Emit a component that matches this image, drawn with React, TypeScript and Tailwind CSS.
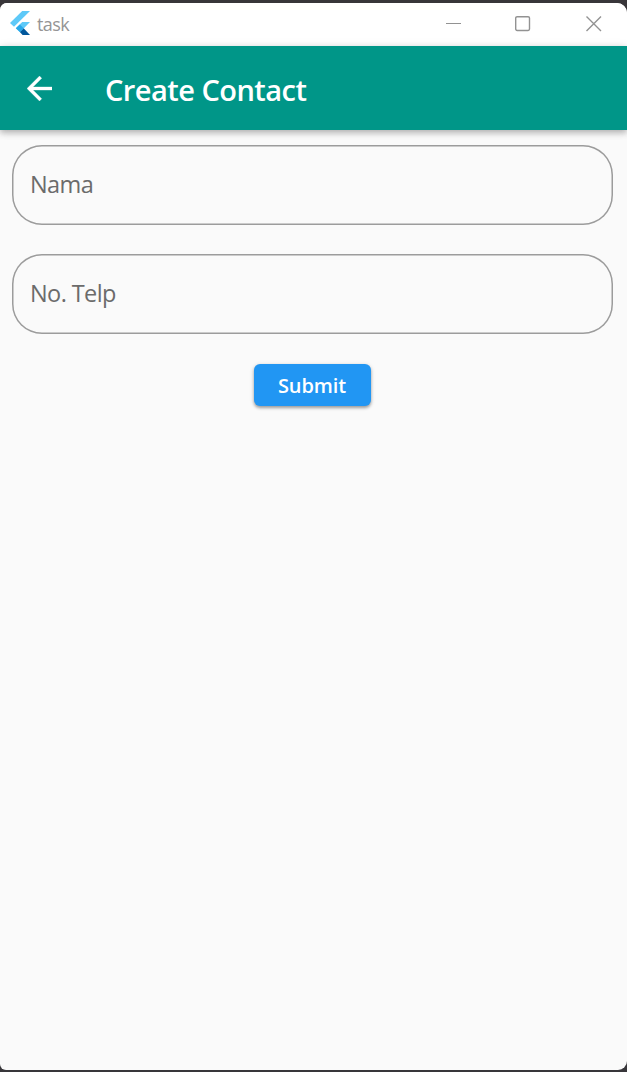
function FlutterLogo() {
  return (
    <svg className="h-6 w-5" viewBox="0 0 20 24" aria-hidden="true">
      <path d="M12.2 0H20L4 15.7 0 12Z" fill="#5ec9f8" />
      <path d="M12.2 11H20L13.7 17.4 9.8 21.1 5.8 17.2Z" fill="#5ec9f8" />
      <path d="M9.8 21.1 13.7 17.3 20 24H12.6Z" fill="#01579b" />
      <path d="M5.8 17.2 9.8 13.4 13.7 17.3 9.8 21.1Z" fill="#29a9ea" />
    </svg>
  );
}

function TitleBar() {
  return (
    <div className="flex h-[43px] shrink-0 items-start bg-white pl-[10px] pt-2">
      <FlutterLogo />
      <span className="ml-[7px] mt-[1px] text-[18px] leading-6 tracking-[-0.6px] text-[#959595]">task</span>
      <div className="ml-auto flex pr-[25px] pt-[5px] text-[#929292]">
        <svg className="mr-[53px] h-4 w-4" viewBox="0 0 16 16" fill="none" stroke="currentColor">
          <path d="M0 7.5H15" />
        </svg>
        <svg className="mr-[55px] h-4 w-4" viewBox="0 0 16 16" fill="none" stroke="currentColor" strokeWidth="1.4">
          <rect x="0.7" y="0.7" width="13.8" height="13.8" rx="1.4" />
        </svg>
        <svg className="h-4 w-4" viewBox="0 0 16 16" fill="none" stroke="currentColor" strokeWidth="1.4">
          <path d="M.5.5 15 15M15 .5.5 15" />
        </svg>
      </div>
    </div>
  );
}

function AppBar() {
  return (
    <header className="relative flex h-[84px] shrink-0 items-center bg-[#009688] pl-[27px] text-white shadow-[0_3px_6px_rgba(0,0,0,0.22),0_1px_9px_rgba(0,0,0,0.12)]">
      <svg className="h-[25px] w-[25px]" viewBox="4 4 16 16" fill="currentColor" stroke="currentColor" strokeWidth="0.2" aria-label="Back">
        <path d="M20 11H7.83l5.59-5.59L12 4l-8 8 8 8 1.41-1.41L7.83 13H20v-2z" />
      </svg>
      <h1 className="ml-[53px] mt-[4px] text-[29px] font-semibold leading-9 tracking-[-0.53px]">Create Contact</h1>
    </header>
  );
}

function Field({ label }: { label: string }) {
  return (
    <input
      aria-label={label}
      placeholder={label}
      className="h-20 w-full rounded-[30px] bg-transparent px-[18px] pb-[3px] text-[23.5px] tracking-[-0.6px] text-[#6b6b6b] shadow-[inset_0_0_0_1.5px_#9c9c9c] outline-none placeholder:text-[#6b6b6b]"
    />
  );
}

export default function App() {
  return (
    <div className="flex h-[1072px] w-[627px] flex-col bg-[#38363a] pb-[2px] pt-[3px] font-['Open_Sans','Noto_Sans',sans-serif]">
      <div className="flex flex-1 flex-col overflow-hidden rounded-bl-[6px] rounded-br-[9px] rounded-tl-[7px] rounded-tr-[10px] bg-[#fafafa]">
        <TitleBar />
        <AppBar />
        <main className="flex flex-col items-center pl-3 pr-[14px] pt-[15px]">
          <div className="flex w-full flex-col gap-[29px]">
            <Field label="Nama" />
            <Field label="No. Telp" />
          </div>
          <button className="mt-[30px] h-[42px] w-[117px] rounded-[6px] bg-[#2196f3] pr-px pt-[2px] text-[20px] font-semibold tracking-[-0.1px] text-white shadow-[0_2px_3px_rgba(0,0,0,0.3),0_1px_5px_rgba(0,0,0,0.14)]">
            Submit
          </button>
        </main>
      </div>
    </div>
  );
}
